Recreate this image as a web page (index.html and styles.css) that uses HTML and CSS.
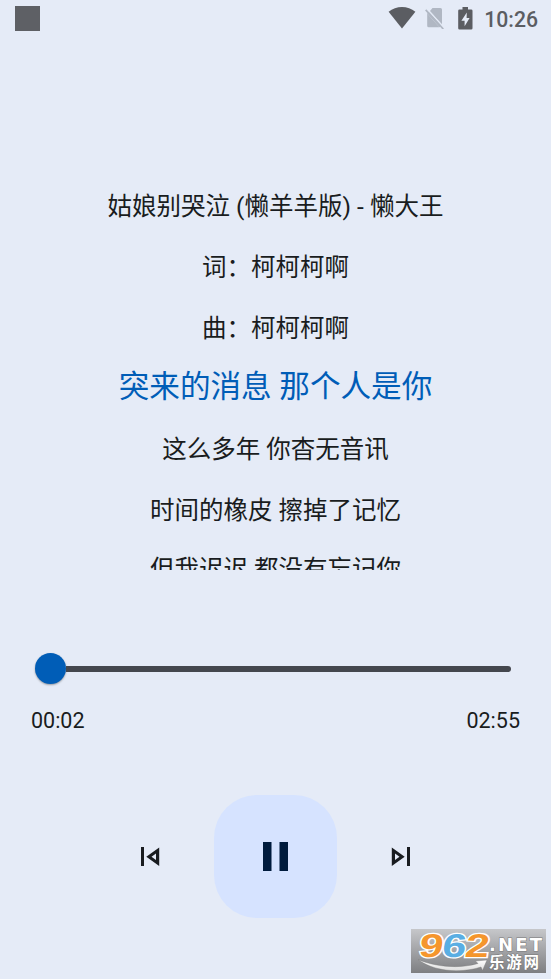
FILE: index.html
```html
<!DOCTYPE html>
<html lang="zh-CN">
<head>
  <meta charset="UTF-8" />
  <meta name="viewport" content="width=device-width, initial-scale=1.0"/>
  <title>Player</title>
  <link rel="stylesheet" href="styles.css">
</head>
<body>

  <header class="status-bar">
    <span class="app-mark"></span>
    <div class="status-icons">
      <svg class="wifi" width="28" height="22" viewBox="0 0 28 22">
        <path d="M14 21.500L.6 4.700C4.500 1.700 9 0 14 0s9.500 1.700 13.400 4.700z" fill="#5b5d62"/>
      </svg>
      <svg class="no-sim" width="20" height="22" viewBox="0 0 20 22">
        <path d="M7.500 1H15.500Q17 1 17 2.500V17.500L5 4zM2.200 6.500L14.500 20.300H3.700Q2.200 20.300 2.200 18.800z" fill="#b0b7c3"/>
        <path d="M2.200 6.500L5 4 17 17.500 14.500 20.300z" fill="#b0b7c3"/>
        <path d="M1.800 1.800L19.300 21" stroke="#e5ebf7" stroke-width="1.500"/>
        <path d="M.7 2.900L18.300 22" stroke="#b0b7c3" stroke-width="1.700"/>
      </svg>
      <svg class="battery" width="15" height="23" viewBox="0 0 15 23">
        <path d="M4.500 0h5.500v2.500h3.200q1.300 0 1.300 1.300v17.400q0 1.300-1.300 1.300H1.500q-1.300 0-1.300-1.300V3.800q0-1.300 1.300-1.300h3z" fill="#5b5d62"/>
        <path d="M8.800 5.500L3.400 13.700h3.200v5.500L11.600 11H8.600z" fill="#e5ebf7"/>
      </svg>
      <span class="clock">10:26</span>
    </div>
  </header>

  <main class="lyrics">
    <p>姑娘别哭泣 (懒羊羊版) - 懒大王</p>
    <p>词：柯柯柯啊</p>
    <p>曲：柯柯柯啊</p>
    <p class="current">突来的消息 那个人是你</p>
    <p>这么多年 你杳无音讯</p>
    <p>时间的橡皮 擦掉了记忆</p>
    <p>但我迟迟 都没有忘记你</p>
  </main>

  <div class="seek">
    <span class="thumb"></span>
    <span class="track"></span>
  </div>
  <div class="times">
    <span>00:02</span>
    <span>02:55</span>
  </div>

  <div class="controls">
    <svg width="20" height="20" viewBox="0 0 20 20">
      <path d="M1 0h3v19H1z" fill="#191c20"/>
      <path fill-rule="evenodd" d="M19.200 .5v18.500L6.300 9.700zM16 6.500v6.500L11.500 9.700z" fill="#191c20"/>
    </svg>
    <button class="play">
      <svg width="26" height="30" viewBox="0 0 26 30">
        <path d="M0 0h8.500v29H0zM16.500 0H25v29h-8.500z" fill="#001b3d"/>
      </svg>
    </button>
    <svg width="20" height="20" viewBox="0 0 20 20">
      <path d="M16 0h3v19h-3z" fill="#191c20"/>
      <path fill-rule="evenodd" d="M.8 .5v18.500L13.700 9.700zM4 6.500v6.500L8.500 9.700z" fill="#191c20"/>
    </svg>
  </div>

  <div class="watermark">
    <svg width="135" height="44" viewBox="0 0 135 44">
      <defs>
        <linearGradient id="swoosh" x1="0" x2="0" y1="0" y2="1">
          <stop offset="0" stop-color="#fff"/>
          <stop offset="1" stop-color="#dedede"/>
        </linearGradient>
      </defs>
      <g class="digits" transform="translate(0 27.500) skewX(-8)">
        <text x="7" y="0" textLength="24" lengthAdjust="spacingAndGlyphs" fill="#f5962d">9</text>
        <text x="30" y="0" textLength="24" lengthAdjust="spacingAndGlyphs" fill="#5aaee3">6</text>
        <text x="53" y="0" textLength="24" lengthAdjust="spacingAndGlyphs" fill="#f5962d">2</text>
      </g>
      <path d="M7 30.500C24 38 49 40 67 34.500L64.500 32 76 31 71.500 41.500 70 38C48 45 22 42 7 30.500z" fill="url(#swoosh)" stroke="#777" stroke-width=".4"/>
      <text class="net" x="78" y="22" textLength="53">.NET</text>
      <text class="site" x="78" y="39" textLength="50">乐游网</text>
    </svg>
  </div>

</body>
</html>
```
FILE: styles.css
```css
body {
  margin: 0;
  height: 979px;
  overflow: hidden;
  position: relative;
  background: #e5ebf7;
  color: #191c20;
  font-family: Roboto, "Noto Sans CJK SC", sans-serif;
}

.status-bar {
  display: flex;
  justify-content: space-between;
  height: 38px;
  padding: 0 13px 0 15px;
}

.app-mark {
  width: 25px;
  height: 25px;
  margin-top: 6px;
  background: #5e6065;
}

.status-icons {
  display: flex;
  align-items: flex-start;
}

.wifi {
  margin: 7px 9px 0 0;
}

.no-sim {
  margin: 7px 13px 0 0;
}

.battery {
  margin: 7px 11px 0 0;
}

.clock {
  font-size: 21.2px;
  font-weight: 500;
  line-height: 39px;
  color: #5b5d62;
}

.lyrics {
  height: 394px;
  margin-top: 138px;
  overflow: hidden;
  text-align: center;
}

.lyrics p {
  margin: 0;
  height: 60.8px;
  line-height: 61px;
  font-size: 24.5px;
  white-space: nowrap;
}

.lyrics .current {
  font-size: 30.6px;
  line-height: 57px;
  color: #005db7;
}

.lyrics p:last-child {
  line-height: 58px;
}

.seek {
  display: flex;
  align-items: center;
  height: 31px;
  margin: 83px 40px 0 35px;
}

.thumb {
  width: 31px;
  height: 31px;
  border-radius: 50%;
  background: #005db7;
  box-shadow: 0 1px 2px rgba(0, 0, 0, 0.35);
}

.track {
  flex: 1;
  height: 6px;
  border-radius: 0 3px 3px 0;
  background: #44474e;
}

.times {
  display: flex;
  justify-content: space-between;
  margin: 21px 31px 0 31px;
  font-size: 21.5px;
  line-height: 32px;
}

.controls {
  display: flex;
  justify-content: center;
  align-items: center;
  gap: 54px;
  margin-top: 58px;
}

.play {
  display: flex;
  justify-content: center;
  align-items: center;
  width: 123px;
  height: 123px;
  padding: 0;
  border: 0;
  border-radius: 43px;
  background: #d6e3ff;
}

.watermark {
  position: absolute;
  left: 411px;
  top: 929px;
  width: 135px;
  height: 44px;
  background: linear-gradient(#c6c7ca, #7e7f82);
}

.watermark svg {
  display: block;
}

.digits {
  font: bold 33px "Liberation Sans", sans-serif;
  stroke: #fff;
  stroke-width: 2.5px;
  paint-order: stroke;
}

.net {
  font: bold 18px "DejaVu Sans", sans-serif;
  fill: #fff;
  stroke: #777;
  stroke-width: 1px;
  paint-order: stroke;
}

.site {
  font: bold 15.5px "Noto Sans CJK SC", sans-serif;
  fill: #fff;
  stroke: #777;
  stroke-width: 1px;
  paint-order: stroke;
}
```
